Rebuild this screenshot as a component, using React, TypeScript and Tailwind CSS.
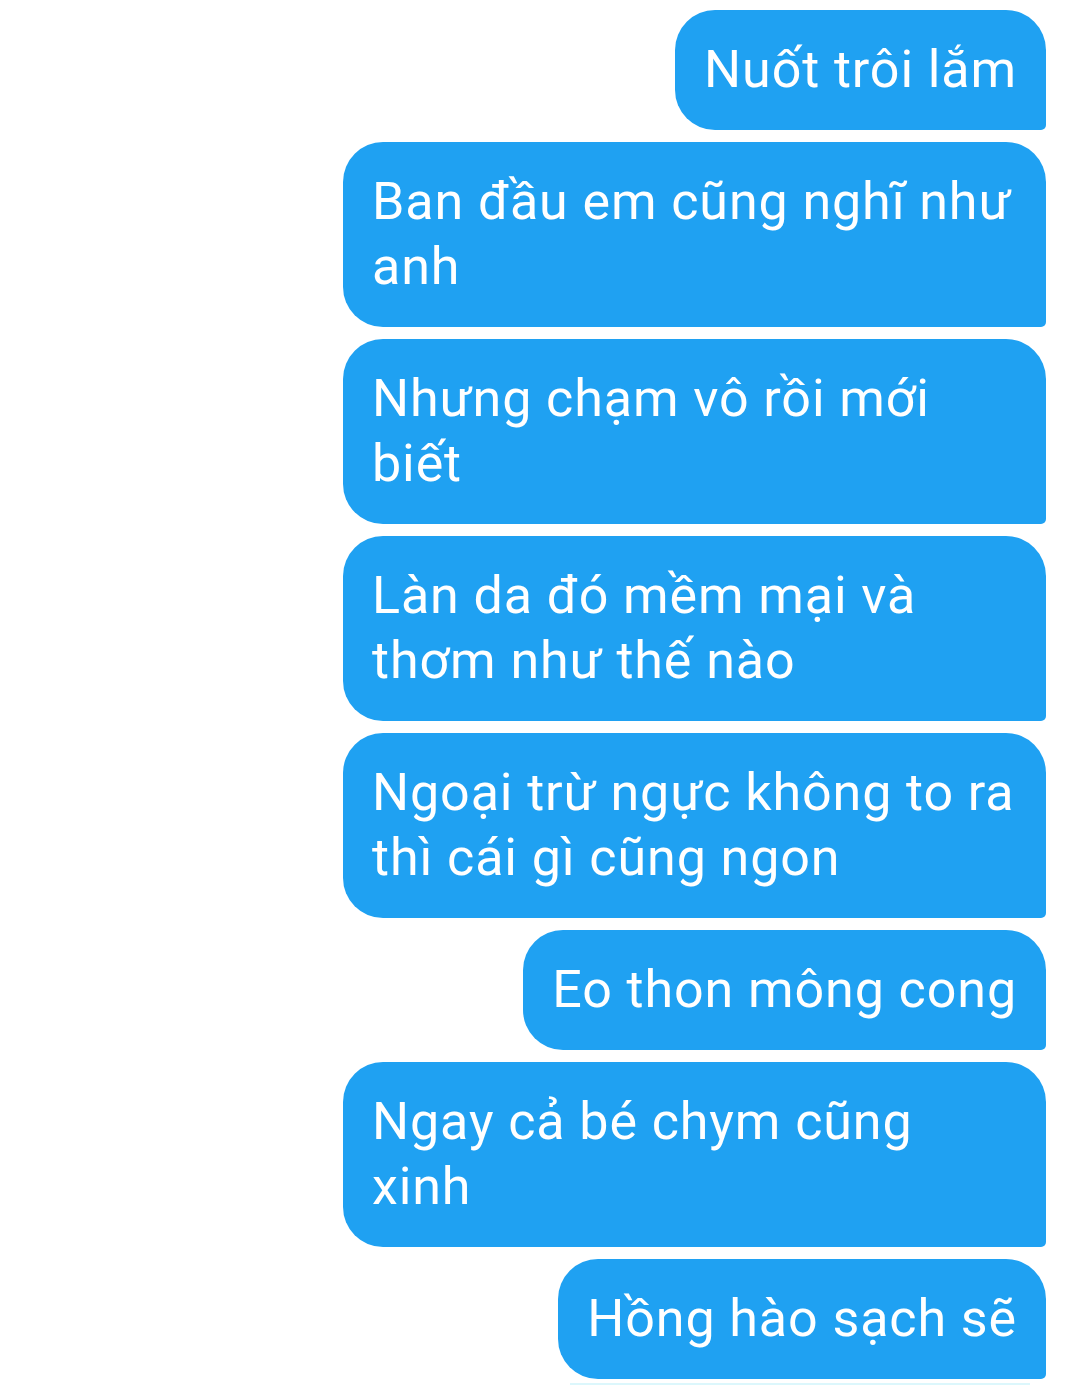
import React from 'react';

const messages: string[] = [
  'Nuốt trôi lắm',
  'Ban đầu em cũng nghĩ như anh',
  'Nhưng chạm vô rồi mới biết',
  'Làn da đó mềm mại và thơm như thế nào',
  'Ngoại trừ ngực không to ra thì cái gì cũng ngon',
  'Eo thon mông cong',
  'Ngay cả bé chym cũng xinh',
  'Hồng hào sạch sẽ',
];

const Bubble = ({ text }: { text: string }) => (
  <div className="max-w-[703px] rounded-[40px] rounded-br-[5px] bg-[#1fa1f2] px-[29px] pt-[27px] pb-[28px] text-[52px] leading-[65px] tracking-[0.9px] text-white">
    {text}
  </div>
);

export default function App() {
  return (
    <div
      className="flex h-[1385px] w-[1080px] flex-col items-end gap-[12px] overflow-hidden bg-white pt-[10px] pr-[34px]"
      style={{ fontFamily: 'Roboto, "Noto Sans", sans-serif' }}
    >
      {messages.map((m, i) => (
        <Bubble key={i} text={m} />
      ))}
      {/* edge of the next bubble peeking in */}
      <div className="-mt-[8px] mr-[16px] h-[2px] w-[460px] bg-[#dcf7fc]" />
    </div>
  );
}
